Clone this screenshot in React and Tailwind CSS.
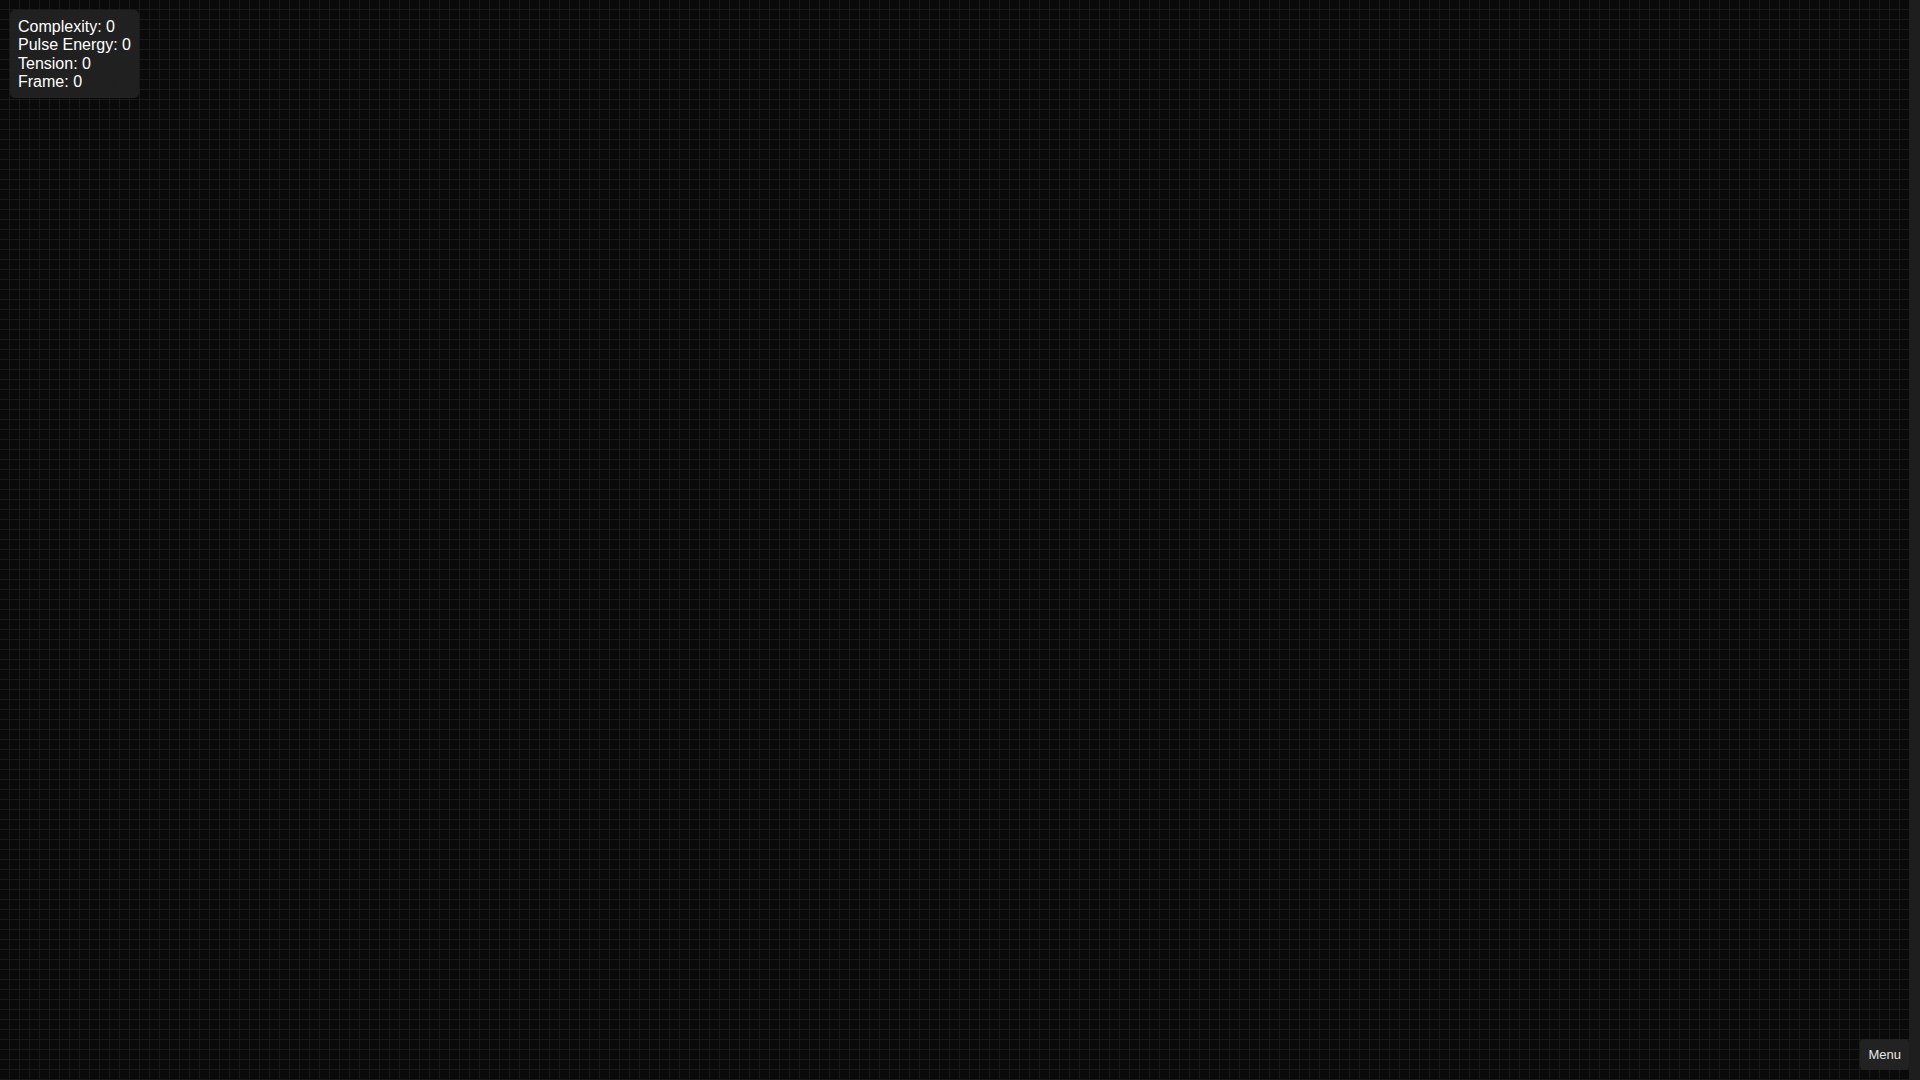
export default function App() {
  const stats = [
    ['Complexity', 0],
    ['Pulse Energy', 0],
    ['Tension', 0],
    ['Frame', 0],
  ];

  return (
    <div className="flex h-screen w-full overflow-hidden bg-[#0a0a0a] font-['Liberation_Sans',Arial,sans-serif]">
      <div className="relative flex-1 bg-[#0a0a0a] bg-[linear-gradient(to_right,transparent_9px,#1a1a1a_9px),linear-gradient(to_bottom,transparent_9px,#1a1a1a_9px)] bg-[size:10px_10px]">
        <div className="absolute left-[10px] top-[10px] rounded-[5px] bg-[#222222]/90 px-2 pb-[6px] pt-[8px] text-base leading-[18.4px] text-white">
          {stats.map(([label, value]) => (
            <div key={label}>
              {label}: {value}
            </div>
          ))}
        </div>

        <button
          type="button"
          className="absolute bottom-[10px] right-0 rounded-[4px] bg-[#222222] px-2 py-2 text-[13px] leading-[15px] text-[#e6e6e6]"
        >
          Menu
        </button>
      </div>
      <div className="w-[11px] bg-[#1e1e1e]" />
    </div>
  );
}
